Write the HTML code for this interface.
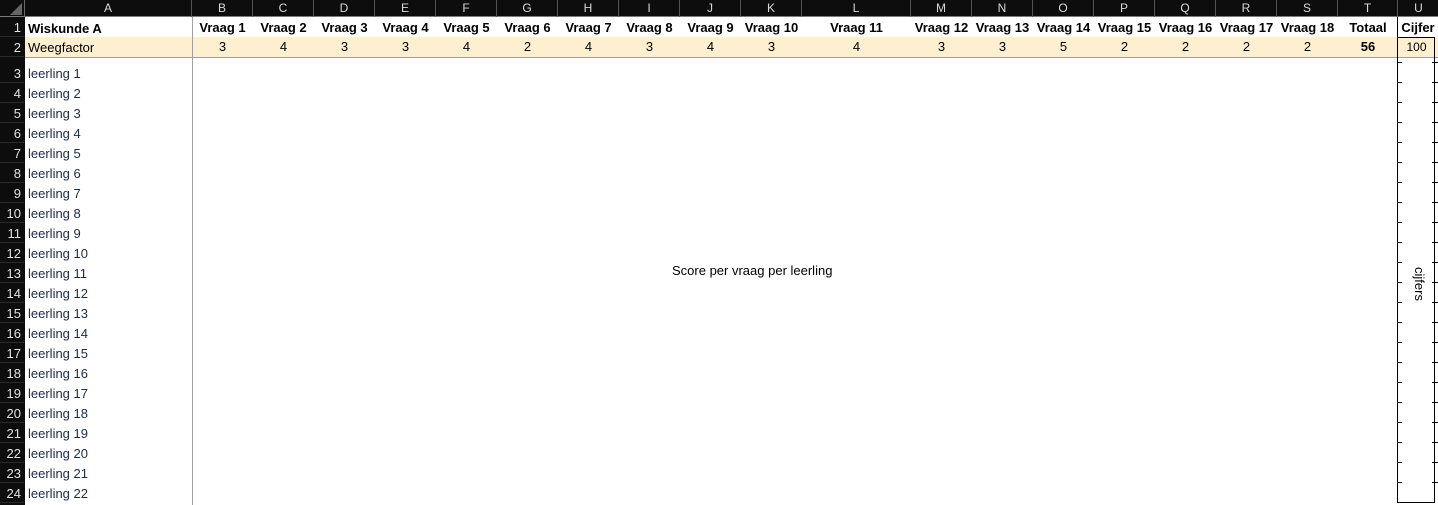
<!DOCTYPE html>
<html><head><meta charset="utf-8"><style>
*{margin:0;padding:0;box-sizing:border-box}
body{width:1438px;height:505px;overflow:hidden;background:#fff;position:relative;font-family:"Liberation Sans",sans-serif;font-size:13px;color:#000}
.a{position:absolute}
#hdr{left:0;top:0;width:1438px;height:17px;background:#0d0d0d;border-bottom:1px solid #7a7a7a}
.ch{position:absolute;top:0;height:17px;line-height:17px;text-align:center;color:#d8d8d8;font-size:12px;border-right:1px solid #555}
#rh{left:0;top:17px;width:25px;height:488px;background:#0d0d0d}
.rn{position:absolute;left:0;width:24px;height:20px;line-height:21px;text-align:right;padding-right:3px;color:#e0e0e0;font-size:13px;border-bottom:1px solid #2a2a2a}
.c{position:absolute;height:20px;line-height:20px;text-align:center}
.b{font-weight:bold}
.l{position:absolute;left:28px;height:20px;line-height:21px;color:#1c2b44}
</style></head><body>
<div class="a" style="left:25px;top:37px;width:1413px;height:20px;background:#fdefcf"></div>
<div class="a" style="left:25px;top:57px;width:1413px;height:1px;background:#a0a0a0"></div>
<div class="a" style="left:192px;top:17px;width:1px;height:488px;background:#a0a0a0"></div>
<div class="a" id="hdr">
<div class="ch" style="left:0;width:25px;border-right:1px solid #666"><svg width="12" height="12" style="position:absolute;left:10px;top:3px"><path d="M12 0L12 12L0 12Z" fill="#666"/></svg></div>
<div class="ch" style="left:25px;width:167px">A</div>
<div class="ch" style="left:192px;width:61px">B</div>
<div class="ch" style="left:253px;width:61px">C</div>
<div class="ch" style="left:314px;width:61px">D</div>
<div class="ch" style="left:375px;width:61px">E</div>
<div class="ch" style="left:436px;width:61px">F</div>
<div class="ch" style="left:497px;width:61px">G</div>
<div class="ch" style="left:558px;width:61px">H</div>
<div class="ch" style="left:619px;width:61px">I</div>
<div class="ch" style="left:680px;width:61px">J</div>
<div class="ch" style="left:741px;width:61px">K</div>
<div class="ch" style="left:802px;width:109px">L</div>
<div class="ch" style="left:911px;width:61px">M</div>
<div class="ch" style="left:972px;width:61px">N</div>
<div class="ch" style="left:1033px;width:61px">O</div>
<div class="ch" style="left:1094px;width:61px">P</div>
<div class="ch" style="left:1155px;width:61px">Q</div>
<div class="ch" style="left:1216px;width:61px">R</div>
<div class="ch" style="left:1277px;width:61px">S</div>
<div class="ch" style="left:1338px;width:60px">T</div>
<div class="ch" style="left:1398px;width:42px">U</div>
</div>
<div class="a" id="rh">
<div class="rn" style="top:0">1</div><div class="rn" style="top:20px">2</div>
<div class="rn" style="top:46px">3</div><div class="rn" style="top:66px">4</div><div class="rn" style="top:86px">5</div><div class="rn" style="top:106px">6</div><div class="rn" style="top:126px">7</div><div class="rn" style="top:146px">8</div><div class="rn" style="top:166px">9</div><div class="rn" style="top:186px">10</div><div class="rn" style="top:206px">11</div><div class="rn" style="top:226px">12</div><div class="rn" style="top:246px">13</div><div class="rn" style="top:266px">14</div><div class="rn" style="top:286px">15</div><div class="rn" style="top:306px">16</div><div class="rn" style="top:326px">17</div><div class="rn" style="top:346px">18</div><div class="rn" style="top:366px">19</div><div class="rn" style="top:386px">20</div><div class="rn" style="top:406px">21</div><div class="rn" style="top:426px">22</div><div class="rn" style="top:446px">23</div><div class="rn" style="top:466px">24</div>
</div>
<div class="l b" style="top:18px;color:#000">Wiskunde A</div>
<div class="l" style="top:37px;color:#000">Weegfactor</div>
<div class="l" style="top:63px">leerling 1</div><div class="l" style="top:83px">leerling 2</div><div class="l" style="top:103px">leerling 3</div><div class="l" style="top:123px">leerling 4</div><div class="l" style="top:143px">leerling 5</div><div class="l" style="top:163px">leerling 6</div><div class="l" style="top:183px">leerling 7</div><div class="l" style="top:203px">leerling 8</div><div class="l" style="top:223px">leerling 9</div><div class="l" style="top:243px">leerling 10</div><div class="l" style="top:263px">leerling 11</div><div class="l" style="top:283px">leerling 12</div><div class="l" style="top:303px">leerling 13</div><div class="l" style="top:323px">leerling 14</div><div class="l" style="top:343px">leerling 15</div><div class="l" style="top:363px">leerling 16</div><div class="l" style="top:383px">leerling 17</div><div class="l" style="top:403px">leerling 18</div><div class="l" style="top:423px">leerling 19</div><div class="l" style="top:443px">leerling 20</div><div class="l" style="top:463px">leerling 21</div><div class="l" style="top:483px">leerling 22</div>
<div class="c b" style="top:18px;left:192px;width:61px">Vraag 1</div>
<div class="c b" style="top:18px;left:253px;width:61px">Vraag 2</div>
<div class="c b" style="top:18px;left:314px;width:61px">Vraag 3</div>
<div class="c b" style="top:18px;left:375px;width:61px">Vraag 4</div>
<div class="c b" style="top:18px;left:436px;width:61px">Vraag 5</div>
<div class="c b" style="top:18px;left:497px;width:61px">Vraag 6</div>
<div class="c b" style="top:18px;left:558px;width:61px">Vraag 7</div>
<div class="c b" style="top:18px;left:619px;width:61px">Vraag 8</div>
<div class="c b" style="top:18px;left:680px;width:61px">Vraag 9</div>
<div class="c b" style="top:18px;left:741px;width:61px">Vraag 10</div>
<div class="c b" style="top:18px;left:802px;width:109px">Vraag 11</div>
<div class="c b" style="top:18px;left:911px;width:61px">Vraag 12</div>
<div class="c b" style="top:18px;left:972px;width:61px">Vraag 13</div>
<div class="c b" style="top:18px;left:1033px;width:61px">Vraag 14</div>
<div class="c b" style="top:18px;left:1094px;width:61px">Vraag 15</div>
<div class="c b" style="top:18px;left:1155px;width:61px">Vraag 16</div>
<div class="c b" style="top:18px;left:1216px;width:61px">Vraag 17</div>
<div class="c b" style="top:18px;left:1277px;width:61px">Vraag 18</div>
<div class="c b" style="top:18px;left:1338px;width:60px">Totaal</div>
<div class="c b" style="top:18px;left:1398px;width:40px">Cijfer</div>
<div class="c" style="top:37px;left:192px;width:61px">3</div>
<div class="c" style="top:37px;left:253px;width:61px">4</div>
<div class="c" style="top:37px;left:314px;width:61px">3</div>
<div class="c" style="top:37px;left:375px;width:61px">3</div>
<div class="c" style="top:37px;left:436px;width:61px">4</div>
<div class="c" style="top:37px;left:497px;width:61px">2</div>
<div class="c" style="top:37px;left:558px;width:61px">4</div>
<div class="c" style="top:37px;left:619px;width:61px">3</div>
<div class="c" style="top:37px;left:680px;width:61px">4</div>
<div class="c" style="top:37px;left:741px;width:61px">3</div>
<div class="c" style="top:37px;left:802px;width:109px">4</div>
<div class="c" style="top:37px;left:911px;width:61px">3</div>
<div class="c" style="top:37px;left:972px;width:61px">3</div>
<div class="c" style="top:37px;left:1033px;width:61px">5</div>
<div class="c" style="top:37px;left:1094px;width:61px">2</div>
<div class="c" style="top:37px;left:1155px;width:61px">2</div>
<div class="c" style="top:37px;left:1216px;width:61px">2</div>
<div class="c" style="top:37px;left:1277px;width:61px">2</div>
<div class="c b" style="top:37px;left:1338px;width:60px">56</div>
<div class="c" style="top:37px;left:1398px;width:37px;font-size:12px">100</div>
<div class="a" style="left:672px;top:263px;font-size:13px">Score per vraag per leerling</div>
<div class="a" style="left:1397px;top:17px;width:1px;height:486px;background:#000"></div>
<div class="a" style="left:1434px;top:37px;width:1px;height:466px;background:#000"></div>
<div class="a" style="left:1397px;top:37px;width:38px;height:1px;background:#000"></div>
<div class="a" style="left:1397px;top:502px;width:38px;height:1px;background:#000"></div>
<svg class="a" style="left:1395px;top:60px" width="43" height="445">
<g stroke="#000" stroke-width="1">
<path d="M3 2.5h4M37 2.5h6M3 22.5h4M37 22.5h6M3 42.5h4M37 42.5h6M3 62.5h4M37 62.5h6M3 82.5h4M37 82.5h6M3 102.5h4M37 102.5h6M3 122.5h4M37 122.5h6M3 142.5h4M37 142.5h6M3 162.5h4M37 162.5h6M3 182.5h4M37 182.5h6M3 202.5h4M37 202.5h6M3 222.5h4M37 222.5h6M3 242.5h4M37 242.5h6M3 262.5h4M37 262.5h6M3 282.5h4M37 282.5h6M3 302.5h4M37 302.5h6M3 322.5h4M37 322.5h6M3 342.5h4M37 342.5h6M3 362.5h4M37 362.5h6M3 382.5h4M37 382.5h6M3 402.5h4M37 402.5h6M3 422.5h4M37 422.5h6"/>
</g></svg>
<div class="a" style="left:1396px;top:276px;width:46px;height:16px;line-height:16px;text-align:center;transform:rotate(90deg);font-size:13px">cijfers</div>
</body></html>
